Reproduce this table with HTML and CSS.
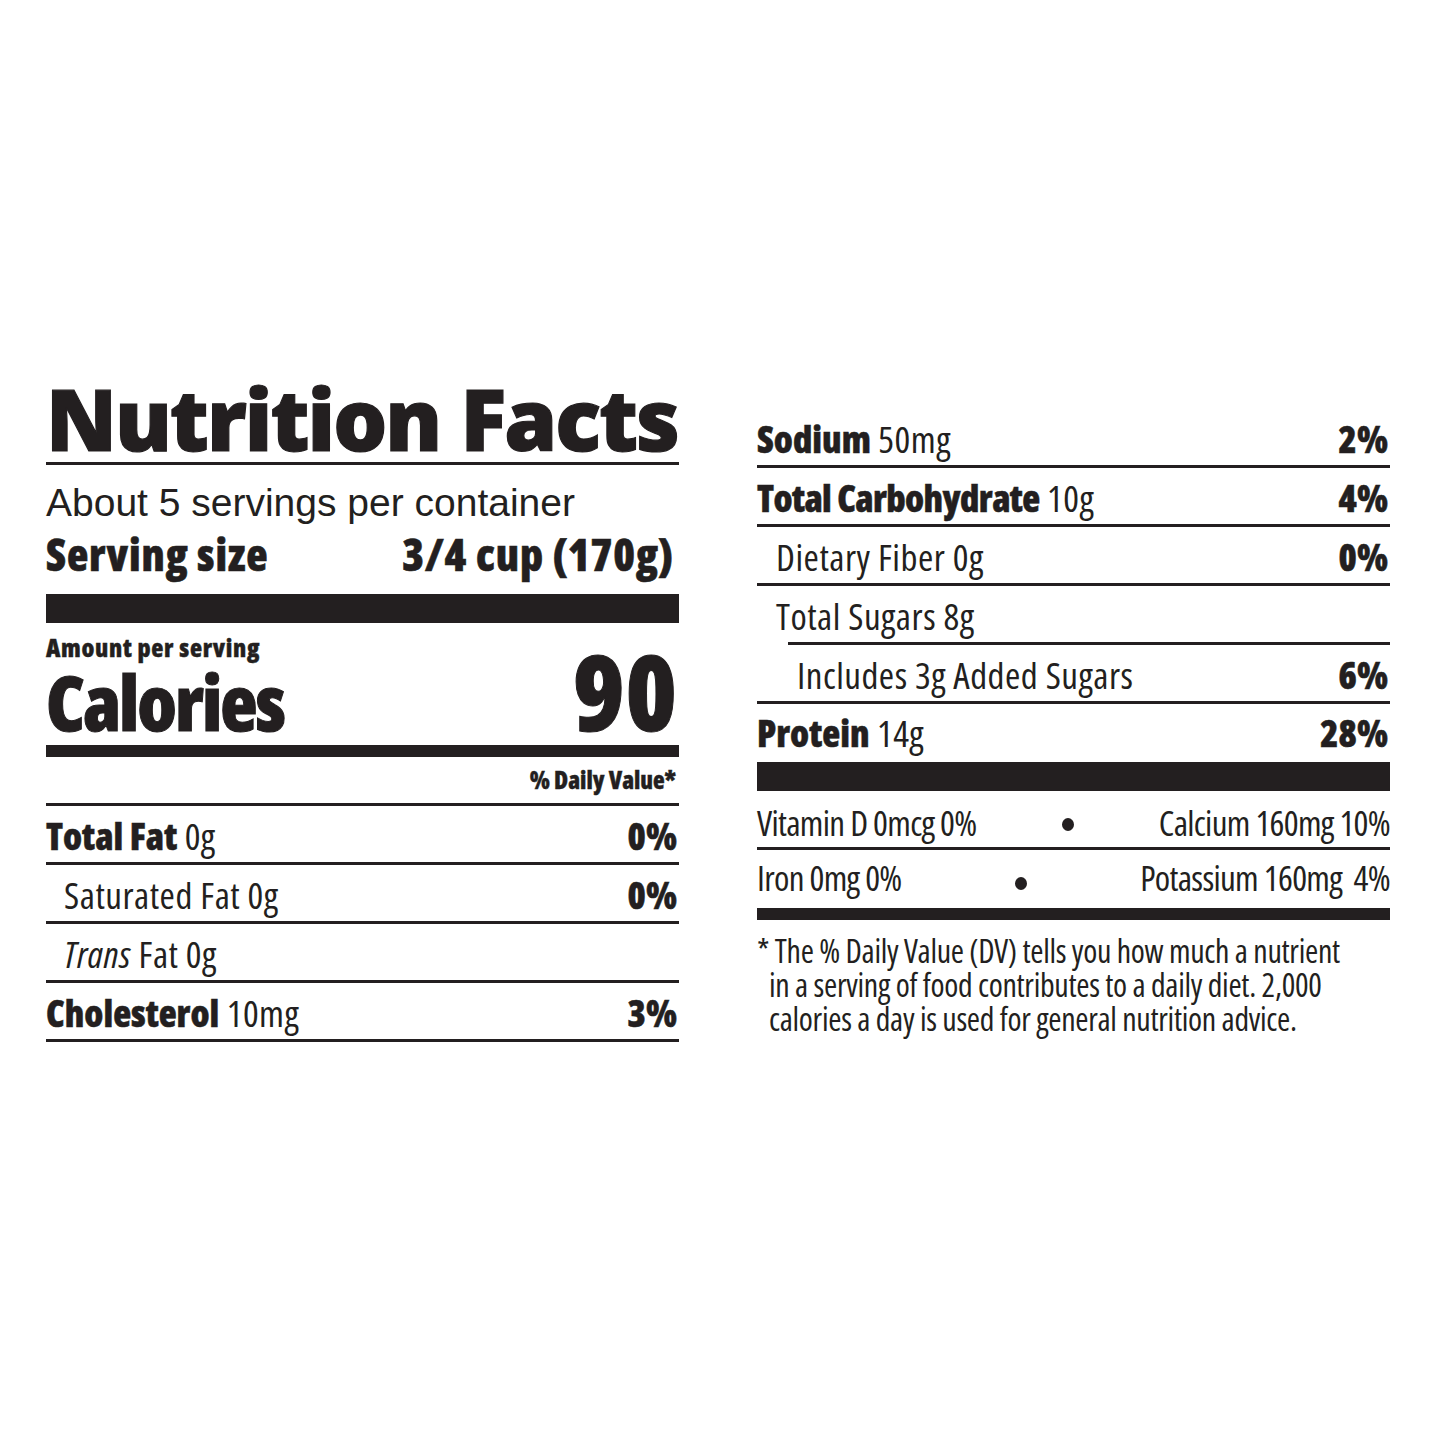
FILE: index.html
```html
<!DOCTYPE html>
<html lang="en">
<head>
<meta charset="utf-8">
<title>Nutrition Facts</title>
<link rel="stylesheet" href="styles.css">
</head>
<body>
<main class="label">
  <section class="col col-left">
    <h1 class="title">Nutrition Facts</h1>
    <div class="servings">About 5 servings per container</div>
    <div class="serving-size"><span>Serving size</span><span class="qty">3/4 cup (170g)</span></div>
    <div class="bar bar-thick"></div>
    <div class="amount">Amount per serving</div>
    <div class="calories"><span class="cal-label">Calories</span><span class="cal-num">90</span></div>
    <div class="bar bar-med"></div>
    <div class="dv-head">% Daily Value*</div>
    <div class="row"><span><b>Total Fat</b> 0g</span><b class="pct">0%</b></div>
    <div class="row indent"><span>Saturated Fat 0g</span><b class="pct">0%</b></div>
    <div class="row indent"><span><i>Trans</i> Fat 0g</span></div>
    <div class="row"><span><b>Cholesterol</b> 10mg</span><b class="pct">3%</b></div>
  </section>
  <section class="col col-right">
    <div class="row"><span><b>Sodium</b> 50mg</span><b class="pct">2%</b></div>
    <div class="row"><span><b class="tight">Total Carbohydrate</b> 10g</span><b class="pct">4%</b></div>
    <div class="row sub1"><span>Dietary Fiber 0g</span><b class="pct">0%</b></div>
    <div class="row sugars"><span class="pull">Total Sugars 8g</span></div>
    <div class="row sub2"><span>Includes 3g Added Sugars</span><b class="pct">6%</b></div>
    <div class="row protein"><span><b>Protein</b> 14g</span><b class="pct">28%</b></div>
    <div class="bar bar-thick"></div>
    <div class="mineral vit"><span>Vitamin D 0mcg 0%</span><span class="dot"></span><span>Calcium 160mg 10%</span></div>
    <div class="mineral iron"><span>Iron 0mg 0%</span><span class="dot"></span><span>Potassium 160mg&nbsp; 4%</span></div>
    <div class="bar bar-med"></div>
    <p class="foot">* The % Daily Value (DV) tells you how much a nutrient<br>in a serving of food contributes to a daily diet. 2,000<br>calories a day is used for general nutrition advice.</p>
  </section>
</main>
</body>
</html>
```
FILE: styles.css
```css
* { box-sizing: border-box; margin: 0; padding: 0; }
body {
  margin: 0;
  background: #fff;
  color: #231f20;
  font-family: "Open Sans", "Liberation Sans", sans-serif;
  font-stretch: 75%;
}
b { font-weight: 800; -webkit-text-stroke: 0.5px #231f20; }
.label {
  display: flex;
  align-items: flex-start;
  gap: 78px;
  padding: 380px 0 0 46px;
}
.col { width: 633px; flex: none; }
.col-right { margin-top: 29px; }

.title {
  font-weight: 800;
  font-stretch: 100%;
  font-size: 85px;
  line-height: 76px;
  height: 85px;
  letter-spacing: -2px;
  -webkit-text-stroke: 1.2px #231f20;
  border-bottom: 3px solid;
  white-space: nowrap;
}
.servings {
  font-family: "Liberation Sans", "Open Sans", sans-serif;
  font-stretch: 100%;
  font-size: 39px;
  height: 62px;
  padding-top: 13px;
  line-height: 49px;
  white-space: nowrap;
}
.serving-size {
  display: flex;
  justify-content: space-between;
  font-weight: 800;
  font-size: 44px;
  height: 67px;
  line-height: 54px;
  letter-spacing: 0.9px;
  -webkit-text-stroke: 0.6px #231f20;
  white-space: nowrap;
}
.qty { padding-right: 5px; }
.bar { background: #231f20; }
.bar-thick { height: 29px; }
.bar-med { height: 12px; }
.amount {
  font-weight: 800;
  font-size: 25px;
  height: 39px;
  padding-top: 10px;
  line-height: 29px;
  letter-spacing: 0.7px;
  -webkit-text-stroke: 0.4px #231f20;
  white-space: nowrap;
}
.calories {
  display: flex;
  justify-content: space-between;
  align-items: baseline;
  height: 83px;
  line-height: 57px;
  font-weight: 800;
  -webkit-text-stroke: 1px #231f20;
}
.cal-label { font-size: 77px; letter-spacing: -2px; }
.cal-num { font-size: 104px; padding-right: 1px; letter-spacing: 1px; }
.dv-head {
  text-align: right;
  font-weight: 800;
  font-size: 24px;
  height: 49px;
  padding-right: 3px;
  line-height: 45px;
  -webkit-text-stroke: 0.4px #231f20;
  border-bottom: 3px solid;
}
.row {
  display: flex;
  justify-content: space-between;
  height: 59px;
  padding-top: 3px;
  line-height: 53px;
  font-size: 37px;
  letter-spacing: 0.5px;
  border-bottom: 3px solid;
  white-space: nowrap;
}
.row b { letter-spacing: 0; }
.row b.tight { letter-spacing: -0.6px; }
.pct { padding-right: 2px; }
.indent { padding-left: 18px; }
.sub1 { padding-left: 19px; }
.sub2 { padding-left: 40px; }
.sugars { margin-left: 31px; }
.pull { margin-left: -12px; }
.protein { height: 58px; padding-top: 0; line-height: 57px; border-bottom: none; }

.mineral {
  display: flex;
  justify-content: space-between;
  align-items: flex-start;
  font-size: 35px;
  letter-spacing: -0.7px;
  white-space: pre;
}
.vit { height: 59px; padding-top: 7px; line-height: 49px; border-bottom: 3px solid; }
.iron { height: 58px; line-height: 55px; }
.dot {
  width: 12px;
  height: 13px;
  border-radius: 50%;
  background: #231f20;
}
.vit .dot { margin-top: 20px; }
.iron .dot { margin-top: 27px; }

.foot {
  font-size: 32px;
  line-height: 34px;
  padding: 14px 0 0 12px;
  text-indent: -12px;
  letter-spacing: -0.3px;
  white-space: nowrap;
}
```
